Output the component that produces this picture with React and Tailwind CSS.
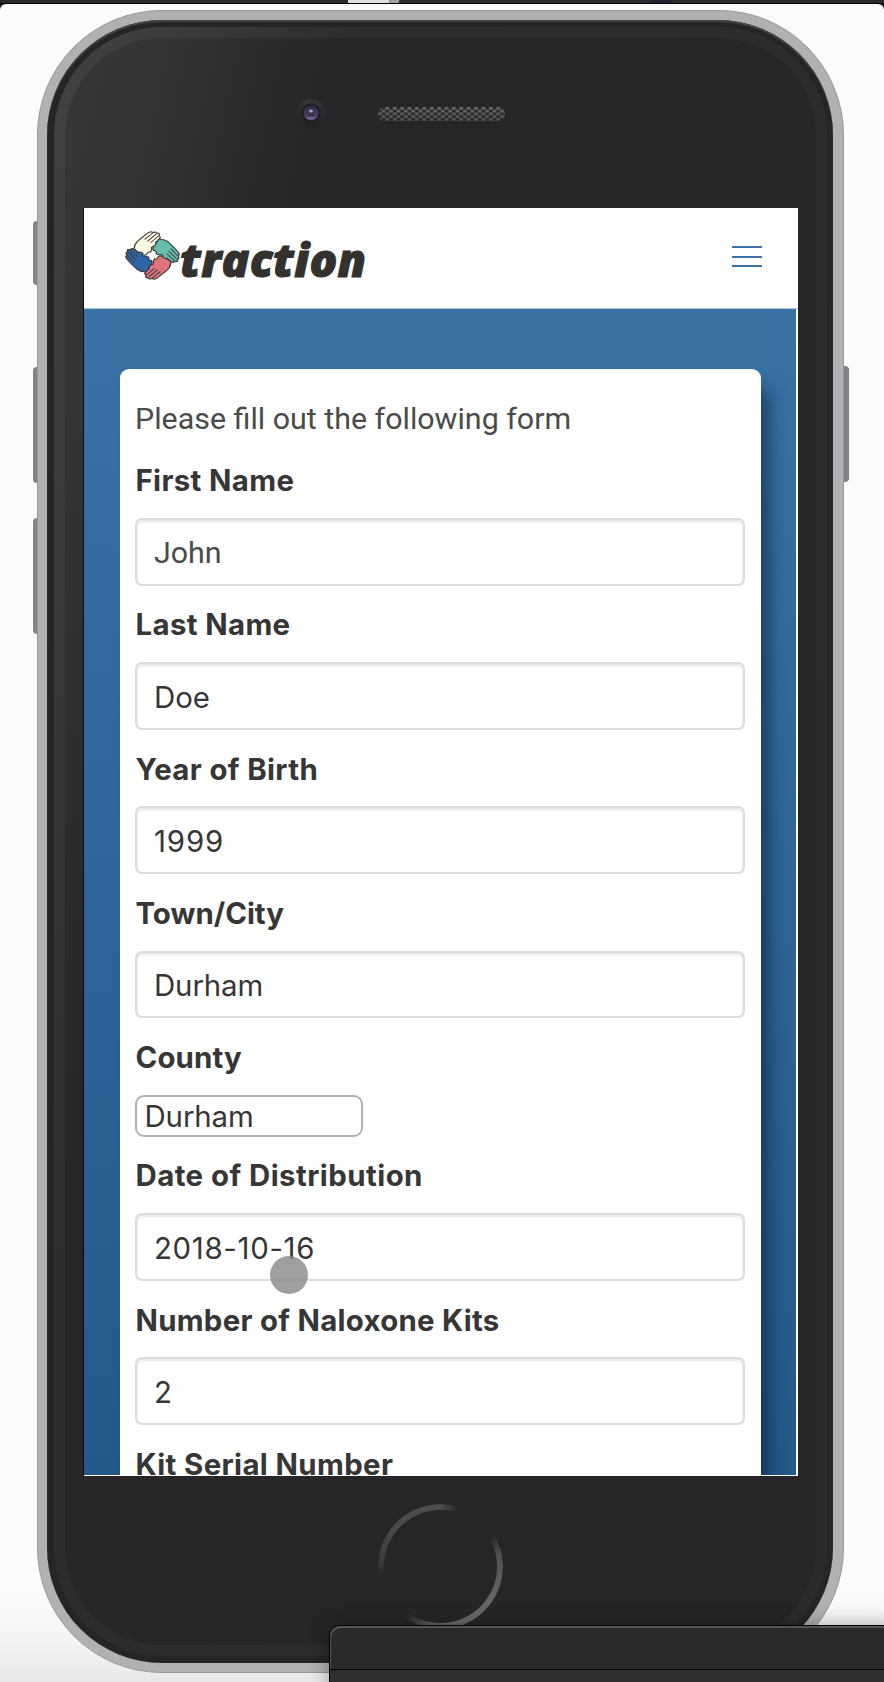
import React from "react";

function Label({ children, className = "tracking-[0.37px]" }) {
  return (
    <label className={`flex h-[76.4px] items-center pt-[2px] pl-[0.5px] font-['Inter'] text-[29.4px] font-bold leading-none whitespace-nowrap text-[#363636] ${className}`}>
      {children}
    </label>
  );
}

function Field({ label, value, labelClass, valueClass = "font-['Inter'] text-[#363636] text-[29.4px]" }) {
  return (
    <div className="flex flex-col">
      <Label className={labelClass}>{label}</Label>
      <div className={`flex h-[67.8px] items-center rounded-[7px] border-2 border-[#dbdbdb] bg-white pl-[17px] pt-[2.5px] leading-none shadow-[inset_0_2px_3px_rgba(10,10,10,0.1)] ${valueClass}`}>
        {value}
      </div>
    </div>
  );
}

function Hand({ fill, angle }) {
  return (
    <g transform={`rotate(${angle} 24.5 24.5)`}>
      <path
        d="M8.3 18.8 C8 16 8.8 13 11 10.4 L15.3 6.4 L21.5 1.2 L23.5 .7 L25 1.6 L27 .9 L28.5 2 L30.4 2.4 L30.4 4.6 L31.5 6.5 L30 9.4 L27.2 11.2 C28.2 12.8 28 14.8 26.6 16 C25 14.8 22.8 15.6 24 18.2 L22.7 21.3 C20.7 20.4 19.8 21.8 19.4 23.4 C17.2 25 14.8 23.4 14.3 22 L11.5 21 Z"
        fill={fill}
        stroke="#3b3a38"
        strokeWidth="1.1"
        strokeLinejoin="round"
      />
      <path d="M24.8 2 L17.5 8.4 M28.2 2.6 L20 10.3 M29.8 5 L22.8 11.8" stroke="#3b3a38" strokeWidth=".9" fill="none" />
    </g>
  );
}

function Logo() {
  return (
    <div className="flex items-start">
      <svg width="55" height="49" viewBox="0 0 49 49" preserveAspectRatio="none" className="block">
        <Hand fill="#fdfae4" angle={0} />
        <Hand fill="#66bcae" angle={90} />
        <Hand fill="#e0727a" angle={180} />
        <Hand fill="#2c66a8" angle={270} />
      </svg>
      <span className="pt-[3.5px] font-['Open_Sans'] text-[46px] font-extrabold italic leading-[49px] tracking-[0.2px] text-[#33312e] [-webkit-text-stroke:1px_#33312e]">traction</span>
    </div>
  );
}

function Camera() {
  return (
    <svg width="30" height="30" viewBox="0 0 30 30">
      <defs>
        <linearGradient id="bezel" x1="0" y1="0" x2="0" y2="1">
          <stop offset="0" stopColor="#343434" />
          <stop offset="1" stopColor="#232124" />
        </linearGradient>
        <linearGradient id="lens" x1="0" y1="0" x2="0" y2="1">
          <stop offset="0" stopColor="#302a48" />
          <stop offset="1" stopColor="#5a4c78" />
        </linearGradient>
      </defs>
      <circle cx="15" cy="15" r="14.3" fill="url(#bezel)" />
      <circle cx="15" cy="15" r="9.5" fill="#1e1d20" />
      <circle cx="15" cy="15" r="7.3" fill="url(#lens)" />
      <circle cx="15" cy="15" r="4" fill="#3a3350" />
      <ellipse cx="15" cy="13" rx="2" ry="1.5" fill="#aaa4b4" />
      <ellipse cx="15" cy="20" rx="4" ry="1.3" fill="#75658f" />
    </svg>
  );
}

function Speaker() {
  return (
    <svg width="127" height="14" viewBox="0 0 127 14">
      <defs>
        <pattern id="mesh" width="7.4" height="5.5" patternUnits="userSpaceOnUse">
          <rect width="7.4" height="5.5" fill="#2b2a2c" />
          <rect width="3.7" height="2.75" fill="#707071" />
          <rect x="3.7" y="2.75" width="3.7" height="2.75" fill="#707071" />
        </pattern>
        <linearGradient id="meshShade" x1="0" y1="0" x2="0" y2="1">
          <stop offset="0" stopColor="#272528" stopOpacity=".1" />
          <stop offset="1" stopColor="#272528" stopOpacity=".5" />
        </linearGradient>
      </defs>
      <rect width="127" height="14" rx="7" fill="url(#mesh)" />
      <rect width="127" height="14" rx="7" fill="url(#meshShade)" />
    </svg>
  );
}

function Screen() {
  return (
    <div className="flex h-[1268px] w-[714px] flex-col overflow-hidden bg-white shadow-[-1px_0_0_#0b0b0c]">
      <header className="flex h-[101px] shrink-0 items-start justify-between border-b border-[#a9cbe0] pl-[41px] pr-[36px]">
        <div className="pt-[23px]"><Logo /></div>
        <div className="flex flex-col gap-[7.5px] pt-[38px]">
          <span className="h-[2px] w-[30px] bg-[#3a72a6]" />
          <span className="h-[2px] w-[30px] bg-[#3a72a6]" />
          <span className="h-[2px] w-[30px] bg-[#3a72a6]" />
        </div>
      </header>
      <main className="mr-[2px] h-[1166px] overflow-hidden bg-linear-to-b from-[#3a72a6] to-[#24598b] px-[36px] pt-[60px]">
        <div className="h-[1300px] w-[640.5px] rounded-[9px] bg-white pl-[15px] pr-[16px] pt-[26px] shadow-[12px_16px_18px_-4px_rgba(10,30,50,0.6)]">
          <p className="h-[46.7px] font-['Roboto'] text-[30.4px] leading-[48px] whitespace-nowrap text-[#4a4a4a]">Please fill out the following form</p>
          <Field label="First Name" value="John" valueClass="font-['Roboto'] text-[#4a4a4a] text-[30.4px]" />
          <Field label="Last Name" value="Doe" />
          <Field label="Year of Birth" value="1999" valueClass="font-['Inter'] text-[#363636] text-[29.4px] tracking-[0.9px]" />
          <Field label="Town/City" labelClass="tracking-[0px]" value="Durham" valueClass="font-['Inter'] text-[#363636] text-[29.4px] tracking-[-0.1px]" />
          <div className="flex flex-col">
            <Label className="tracking-[0.15px]">County</Label>
            <div className="flex h-[42px] w-[228px] items-center rounded-[9px] border-2 border-[#b3b3b3] bg-white pl-[7.5px] pt-[2px] font-['Inter'] text-[29.4px] leading-none tracking-[-0.1px] text-[#363636]">
              Durham
            </div>
          </div>
          <Field label="Date of Distribution" labelClass="tracking-[0.45px]" value="2018-10-16" valueClass="font-['Inter'] text-[#363636] text-[29.4px] tracking-[0.68px]" />
          <Field label="Number of Naloxone Kits" labelClass="tracking-[0.28px]" value="2" />
          <Label>Kit Serial Number</Label>
        </div>
      </main>
    </div>
  );
}

function Phone() {
  return (
    <div className="relative mt-[6px] ml-[37px] h-[1663px] w-[807px]">
      <div className="absolute -left-[4px] top-[211px] h-[64px] w-[12px] rounded-[4px] bg-[#858587]" />
      <div className="absolute -left-[4px] top-[357px] h-[116px] w-[12px] rounded-[4px] bg-[#828187]" />
      <div className="absolute -left-[4px] top-[508px] h-[116px] w-[12px] rounded-[4px] bg-[#848486]" />
      <div className="absolute -right-[5px] top-[356px] h-[116px] w-[12px] rounded-[4px] bg-[#828187]" />
      <div className="relative h-full w-full rounded-[125px] border border-[#989899] bg-[#b1b1b3] p-[9px] pr-[10px]">
        <div className="h-full w-full rounded-[115px] bg-[#252427] p-[7px] pr-[6px] shadow-[inset_0_2px_1px_#454646]">
          <div className="h-full w-full rounded-[108px] bg-[linear-gradient(103.5deg,#424143_0%,#3b3a3b_12%,#2d2d2e_26%,#2b2b2c_100%)] p-[11px]">
            <div className="flex h-full w-full flex-col rounded-[97px] bg-[linear-gradient(103.5deg,#373737_0%,#343335_9%,#2d2d2d_16%,#272528_24%)]">
              <div className="flex h-[170px] shrink-0 items-start pl-[231px] pt-[60px]">
                <Camera />
                <div className="ml-[52px] mt-[9px]"><Speaker /></div>
              </div>
              <div className="ml-[19px]"><Screen /></div>
              <div className="flex justify-center pt-[28px]">
                <div className="h-[125px] w-[125px] rounded-full bg-[conic-gradient(#4d4d4e_0deg,#272528_17deg,#272528_60deg,#505051_78deg,#646465_120deg,#6b6b6c_165deg,#606061_190deg,#272528_215deg,#272528_260deg,#3c3c3d_278deg,#4a4a4b_310deg,#4d4d4e_360deg)] mask-[radial-gradient(circle,transparent_56px,black_57px)]" />
              </div>
            </div>
          </div>
        </div>
      </div>
    </div>
  );
}

export default function App() {
  return (
    <div className="relative h-[1682px] w-[884px] overflow-hidden bg-[#171718]">
      <div className="flex h-[4px] border-b border-black bg-[#29292b]">
        <div className="ml-[348px] h-[3px] w-[41px] bg-[#dfdfe0]" />
        <div className="h-[3px] w-[10px] -skew-x-12 bg-[#a0a0a2]" />
        <div className="ml-[252px] h-[3px] w-[20px] bg-[#211e35]" />
      </div>
      <div className="h-[1678px] rounded-t-[6px] bg-[linear-gradient(#fbfbfb_0%,#fbfbfb_94%,#f6f6f6_97%,#e8e8e8_100%)]">
        <div className="flow-root">
          <Phone />
        </div>
      </div>
      <div className="absolute left-[270px] top-[1256px] h-[38px] w-[38px] rounded-full bg-[#87878a]/80" />
      <div className="absolute left-[329px] top-[1625px] h-[70px] w-[570px] rounded-[11px] border border-black bg-[#2f2f2f] shadow-[0_0_20px_rgba(0,0,0,0.35)]">
        <div className="h-[44px] rounded-t-[10px] border-b border-black bg-[#292a2b] shadow-[inset_1px_2px_1px_#555757]" />
      </div>
    </div>
  );
}
